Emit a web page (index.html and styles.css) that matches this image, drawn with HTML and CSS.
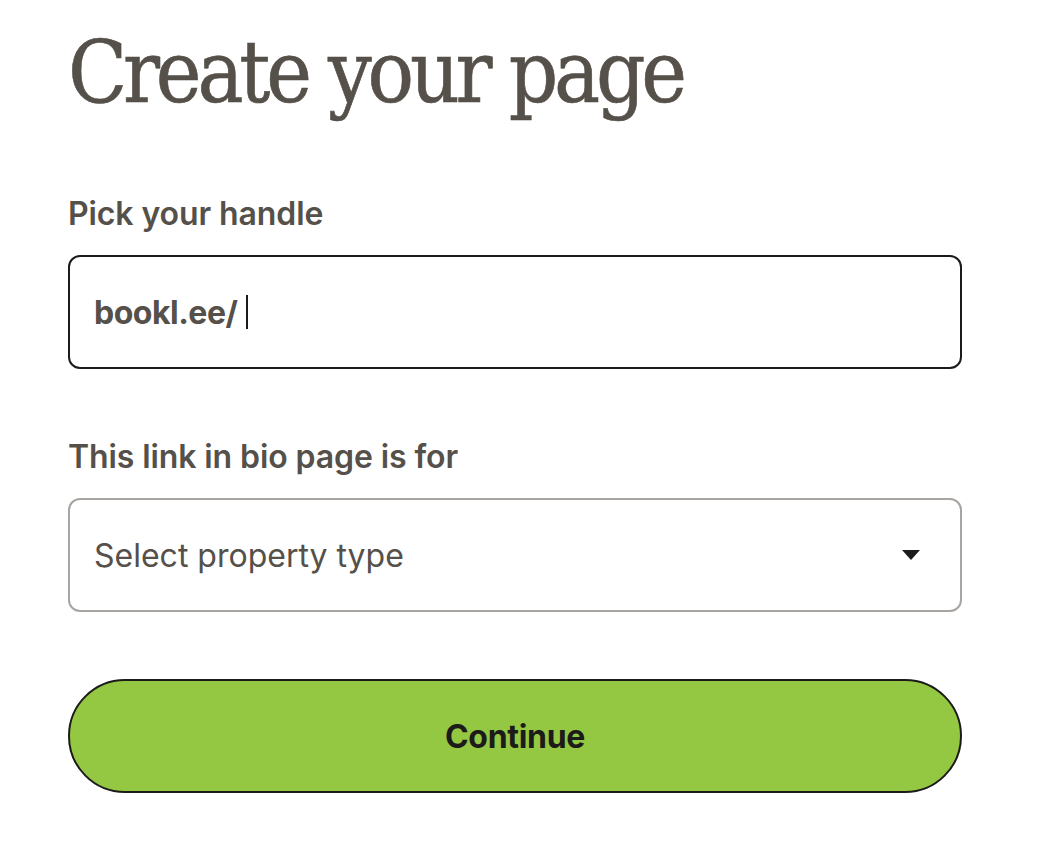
FILE: index.html
```html
<!DOCTYPE html>
<html lang="en">
<head>
<meta charset="utf-8">
<title>Create your page</title>
<link rel="stylesheet" href="styles.css">
</head>
<body>
<main class="page">
  <h1 class="title">Create your page</h1>
  <form class="form">
    <div class="field field-handle">
      <label class="label">Pick your handle</label>
      <div class="input input-active">
        <span class="prefix">bookl.ee/</span><span class="caret"></span>
      </div>
    </div>
    <div class="field field-type">
      <label class="label">This link in bio page is for</label>
      <div class="input input-select">
        <span class="placeholder">Select property type</span>
        <svg class="arrow" width="18" height="10" viewBox="0 0 18 10"><path d="M0 0H18L9 10Z" fill="#1c1b1a"/></svg>
      </div>
    </div>
    <button type="button" class="btn">Continue</button>
  </form>
</main>
</body>
</html>
```
FILE: styles.css
```css
* { box-sizing: border-box; }
html, body { margin: 0; padding: 0; background: #ffffff; }
body { font-family: Inter, "Noto Sans", sans-serif; color: #555049; }
.page { padding: 12px 82px 0 68px; }
.title {
  margin: 0;
  font-family: "DejaVu Serif", serif;
  font-stretch: condensed;
  font-weight: 400;
  font-size: 86px;
  line-height: 120px;
  letter-spacing: -4.2px;
  color: #555049;
  -webkit-text-stroke: 0.6px #555049;
}
.form { display: flex; flex-direction: column; margin-top: 66px; }
.field { display: flex; flex-direction: column; }
.field-handle { margin-bottom: 72px; }
.field-type { margin-bottom: 67px; }
.label { font-size: 32px; font-weight: 600; line-height: 32px; margin-bottom: 25px; letter-spacing: -0.1px; }
.input {
  height: 114px;
  border-radius: 12px;
  display: flex;
  align-items: center;
  padding: 0 40px 0 24px;
  font-size: 32px;
}
.input-active { border: 2px solid #1c1b1a; }
.input-select { border: 2px solid #a8a4a0; justify-content: space-between; }
.prefix { font-weight: 700; color: #555049; letter-spacing: -0.5px; }
.caret { display: inline-block; width: 2px; height: 34px; background: #1c1b1a; margin-left: 9px; }
.placeholder { font-weight: 400; color: #555049; }
.arrow { display: block; }
.btn {
  height: 114px;
  border-radius: 57px;
  border: 2px solid #1c1b1a;
  background: #94c843;
  font-family: Inter, "Noto Sans", sans-serif;
  font-size: 32px;
  font-weight: 700;
  color: #1c1b1a;
  letter-spacing: -0.3px;
  cursor: pointer;
}
```
